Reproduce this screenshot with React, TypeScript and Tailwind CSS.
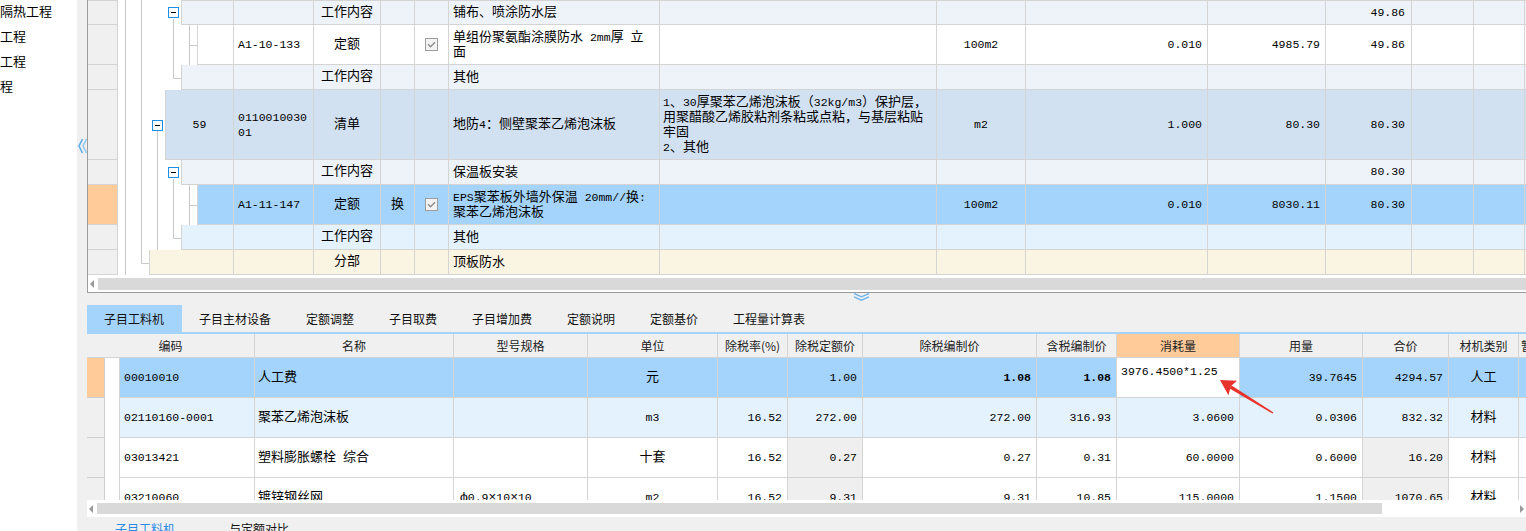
import React from "react";

const MONO = "font-['Liberation_Mono','Noto_Sans_CJK_SC',monospace]";
const GRID = "border-[#d4d4d4]";

function Mixed({ text }: { text: string }) {
  const parts = text.split(/([\x20-\x7e]+)/).filter((p) => p.length > 0);
  return (
    <>
      {parts.map((p, i) =>
        /^[\x20-\x7e]+$/.test(p) ? (
          <span key={i} className="text-[11.5px]">
            {p}
          </span>
        ) : (
          <React.Fragment key={i}>{p}</React.Fragment>
        )
      )}
    </>
  );
}

function Lines({ lines }: { lines?: string[] }) {
  if (!lines) return null;
  return (
    <div className="leading-[15px] whitespace-pre">
      {lines.map((l, i) => (
        <div key={i}>
          <Mixed text={l} />
        </div>
      ))}
    </div>
  );
}

function Minus() {
  return (
    <span className="w-[11px] h-[11px] border border-[#1e8fe4] bg-white flex items-center justify-center">
      <span className="w-[5px] h-px bg-black" />
    </span>
  );
}

function Check() {
  return (
    <span className="w-[13px] h-[13px] border border-[#9d9d9d] bg-[#f3f3f3] flex items-center justify-center">
      <svg width="9" height="7" viewBox="0 0 9 7">
        <path d="M1 3.3 L3.5 5.8 L8 1.2" stroke="#8a8a8a" strokeWidth="1.3" fill="none" />
      </svg>
    </span>
  );
}

type U = {
  start: number;
  h: number;
  bg: string;
  rh?: string;
  minus?: boolean;
  seq?: string;
  code?: string[];
  kind?: string;
  huan?: string;
  check?: boolean;
  name?: string[];
  feat?: string[];
  unit?: string;
  qty?: string;
  price?: string;
  total?: string;
};

const SPACER: Record<number, string> = {
  149: "w-[31px]",
  165: "w-[47px]",
  181: "w-[63px]",
  197: "w-[79px]",
};
const SEQW: Record<number, string> = {
  149: "w-[84px]",
  165: "w-[68px]",
  181: "w-[52px]",
  197: "w-[36px]",
};
const ROWH: Record<number, string> = {
  25: "h-[25px]",
  40: "h-[40px]",
  70: "h-[70px]",
};

const upperRows: U[] = [
  { start: 181, h: 25, bg: "bg-[#eef3f9]", minus: true, kind: "工作内容", name: ["铺布、喷涂防水层"], total: "49.86" },
  {
    start: 197,
    h: 40,
    bg: "bg-white",
    code: ["A1-10-133"],
    kind: "定额",
    check: true,
    name: ["单组份聚氨酯涂膜防水 2mm厚 立", "面"],
    unit: "100m2",
    qty: "0.010",
    price: "4985.79",
    total: "49.86",
  },
  { start: 181, h: 25, bg: "bg-[#eef3f9]", kind: "工作内容", name: ["其他"] },
  {
    start: 165,
    h: 70,
    bg: "bg-[#d2e1f2]",
    minus: true,
    seq: "59",
    code: ["0110010030", "01"],
    kind: "清单",
    name: ["地防4：侧壁聚苯乙烯泡沫板"],
    feat: ["1、30厚聚苯乙烯泡沫板（32kg/m3）保护层，", "用聚醋酸乙烯胶粘剂条粘或点粘，与基层粘贴", "牢固", "2、其他"],
    unit: "m2",
    qty: "1.000",
    price: "80.30",
    total: "80.30",
  },
  { start: 181, h: 25, bg: "bg-[#eef3f9]", minus: true, kind: "工作内容", name: ["保温板安装"], total: "80.30" },
  {
    start: 197,
    h: 40,
    bg: "bg-[#a4d4fc]",
    rh: "bg-[#ffcb99]",
    code: ["A1-11-147"],
    kind: "定额",
    huan: "换",
    check: true,
    name: ["EPS聚苯板外墙外保温 20mm//换:", "聚苯乙烯泡沫板"],
    unit: "100m2",
    qty: "0.010",
    price: "8030.11",
    total: "80.30",
  },
  { start: 181, h: 25, bg: "bg-[#e4f2fe]", kind: "工作内容", name: ["其他"] },
  { start: 149, h: 25, bg: "bg-[#faf4e2]", kind: "分部", name: ["顶板防水"] },
];

const CELL = `shrink-0 h-full border-r ${GRID} flex items-center overflow-hidden`;

function UpperRow({ r, first }: { r: U; first: boolean }) {
  return (
    <div className={`flex shrink-0 ${ROWH[r.h]}`}>
      <div
        className={`w-[30px] shrink-0 border-r border-b ${GRID} ${first ? "border-t" : ""} ${r.rh ?? "bg-[#f0f0f0]"}`}
      />
      <div className={`${SPACER[r.start]} shrink-0 flex items-center justify-end pr-[2px]`}>
        {r.minus ? <Minus /> : null}
      </div>
      <div className={`flex-1 flex border-l border-b ${GRID} ${first ? "border-t" : ""} ${r.bg} text-[13px]`}>
        <div className={`${CELL} ${SEQW[r.start]} justify-center`}>
          {r.seq ? <Mixed text={r.seq} /> : null}
        </div>
        <div className={`${CELL} w-[80px] pl-[4px]`}>
          <Lines lines={r.code} />
        </div>
        <div className={`${CELL} w-[67px] justify-center`}>{r.kind}</div>
        <div className={`${CELL} w-[34px] justify-center`}>{r.huan}</div>
        <div className={`${CELL} w-[34px] justify-center`}>{r.check ? <Check /> : null}</div>
        <div className={`${CELL} w-[211px] pl-[4px]`}>
          <Lines lines={r.name} />
        </div>
        <div className={`${CELL} w-[277px] pl-[3px]`}>
          <Lines lines={r.feat} />
        </div>
        <div className={`${CELL} w-[89px] justify-center`}>{r.unit ? <Mixed text={r.unit} /> : null}</div>
        <div className={`${CELL} w-[182px] justify-end pr-[5px]`}>{r.qty ? <Mixed text={r.qty} /> : null}</div>
        <div className={`${CELL} w-[118px] justify-end pr-[5px]`}>
          {r.price ? <Mixed text={r.price} /> : null}
        </div>
        <div className={`${CELL} w-[86px] justify-end pr-[6px]`}>{r.total ? <Mixed text={r.total} /> : null}</div>
        <div className={`${CELL} w-[62px]`} />
        <div className={`${CELL} w-[51px]`} />
        <div className="flex-1" />
      </div>
    </div>
  );
}

function TreeLines() {
  const c = "#c9c9c9";
  return (
    <svg className="absolute left-[30px] top-0 pointer-events-none" width="80" height="275">
      <g stroke={c} strokeWidth="1" fill="none">
        <path d="M7.5 0 V275" />
        <path d="M23.5 0 V263.5 H31" />
        <path d="M39.5 131 V250" />
        <path d="M55.5 19 V78.5 H63" />
        <path d="M71.5 25 V65 M71.5 45.5 H79" />
        <path d="M55.5 179 V238.5 H63" />
        <path d="M71.5 185 V225 M71.5 205.5 H79" />
      </g>
    </svg>
  );
}

function UpperPanel() {
  return (
    <div className="h-[293px] shrink-0 bg-white border-l border-b border-[#9c9c9c] flex flex-col">
      <div className="relative h-[275px] shrink-0 flex flex-col overflow-hidden">
        {upperRows.map((r, i) => (
          <UpperRow key={i} r={r} first={i === 0} />
        ))}
        <TreeLines />
      </div>
      <div className="h-[3px] shrink-0" />
      <div className="h-[12px] shrink-0 flex">
        <div className="w-[10px] shrink-0 flex items-center pl-[2px]">
          <svg width="4" height="8" viewBox="0 0 4 8">
            <path d="M4 0 L0 4 L4 8 Z" fill="#9a9a9a" />
          </svg>
        </div>
        <div className="flex-1 bg-[#d9d9d9]" />
      </div>
      <div className="h-[2px] shrink-0" />
    </div>
  );
}

const tabs = ["子目工料机", "子目主材设备", "定额调整", "子目取费", "子目增加费", "定额说明", "定额基价", "工程量计算表"];

type B = {
  bg: string;
  rh: string;
  code: string;
  name: string;
  spec?: string;
  unit: string;
  rate?: string;
  dep: string;
  ex: string;
  inc: string;
  cons: string;
  qty: string;
  total: string;
  cat: string;
  bold?: boolean;
  edit?: boolean;
  gray?: boolean;
};

const bottomRows: B[] = [
  {
    bg: "bg-[#a4d4fc]",
    rh: "bg-[#ffcb99]",
    code: "00010010",
    name: "人工费",
    unit: "元",
    dep: "1.00",
    ex: "1.08",
    inc: "1.08",
    cons: "3976.4500*1.25",
    qty: "39.7645",
    total: "4294.57",
    cat: "人工",
    bold: true,
    edit: true,
  },
  {
    bg: "bg-[#e4f2fe]",
    rh: "bg-[#f0f0f0]",
    code: "02110160-0001",
    name: "聚苯乙烯泡沫板",
    unit: "m3",
    rate: "16.52",
    dep: "272.00",
    ex: "272.00",
    inc: "316.93",
    cons: "3.0600",
    qty: "0.0306",
    total: "832.32",
    cat: "材料",
  },
  {
    bg: "bg-white",
    rh: "bg-[#f0f0f0]",
    code: "03013421",
    name: "塑料膨胀螺栓 综合",
    unit: "十套",
    rate: "16.52",
    dep: "0.27",
    ex: "0.27",
    inc: "0.31",
    cons: "60.0000",
    qty: "0.6000",
    total: "16.20",
    cat: "材料",
    gray: true,
  },
  {
    bg: "bg-white",
    rh: "bg-[#f0f0f0]",
    code: "03210060",
    name: "镀锌钢丝网",
    spec: "ф0.9×10×10",
    unit: "m2",
    rate: "16.52",
    dep: "9.31",
    ex: "9.31",
    inc: "10.85",
    cons: "115.0000",
    qty: "1.1500",
    total: "1070.65",
    cat: "材料",
    gray: true,
  },
];

function Num({ v, bold }: { v?: string; bold?: boolean }) {
  if (!v) return null;
  return <span className={`text-[11.5px] ${bold ? "font-bold" : ""}`}>{v}</span>;
}

function BottomRow({ r }: { r: B }) {
  return (
    <div className="flex h-[40px] shrink-0">
      <div className={`w-[18px] shrink-0 border-r border-b border-[#cfcfcf] ${r.rh}`} />
      <div className="w-[15px] shrink-0 bg-white border-r border-[#d4d4d4]" />
      <div className={`flex-1 flex border-b ${GRID} ${r.bg} text-[13px]`}>
        <div className={`${CELL} w-[135px] pl-[4px]`}>
          <Num v={r.code} />
        </div>
        <div className={`${CELL} w-[199px] pl-[3px] whitespace-pre`}>
          <Mixed text={r.name} />
        </div>
        <div className={`${CELL} w-[134px] pl-[6px] whitespace-pre`}>
          {r.spec ? <Mixed text={r.spec} /> : null}
        </div>
        <div className={`${CELL} w-[130px] justify-center`}>
          <Mixed text={r.unit} />
        </div>
        <div className={`${CELL} w-[70px] justify-end pr-[5px]`}>
          <Num v={r.rate} />
        </div>
        <div className={`${CELL} w-[75px] justify-end pr-[5px] ${r.gray ? "bg-[#efefef]" : ""}`}>
          <Num v={r.dep} />
        </div>
        <div className={`${CELL} w-[174px] justify-end pr-[5px]`}>
          <Num v={r.ex} bold={r.bold} />
        </div>
        <div className={`${CELL} w-[80px] justify-end pr-[5px]`}>
          <Num v={r.inc} bold={r.bold} />
        </div>
        {r.edit ? (
          <div className={`shrink-0 h-full border-r ${GRID} w-[123px] bg-white pl-[4px] pt-[4px] overflow-hidden`}>
            <span className="text-[11.5px]">{r.cons}</span>
          </div>
        ) : (
          <div className={`${CELL} w-[123px] justify-end pr-[5px]`}>
            <Num v={r.cons} />
          </div>
        )}
        <div className={`${CELL} w-[123px] justify-end pr-[5px]`}>
          <Num v={r.qty} />
        </div>
        <div className={`${CELL} w-[86px] justify-end pr-[5px] ${r.gray ? "bg-[#efefef]" : ""}`}>
          <Num v={r.total} />
        </div>
        <div className={`${CELL} w-[70px] justify-center`}>{r.cat}</div>
        <div className="flex-1" />
      </div>
    </div>
  );
}

const HCELL = `shrink-0 h-full border-r ${GRID} flex items-center justify-center overflow-hidden whitespace-nowrap`;

function BottomTable() {
  return (
    <div className="bg-white flex flex-col shrink-0">
      <div
        className={`h-[24px] shrink-0 flex bg-[#f0f0f0] border-b ${GRID} text-[12px] text-[#222] font-['Noto_Sans_CJK_SC',sans-serif]`}
      >
        <div className={`${HCELL} w-[168px]`}>编码</div>
        <div className={`${HCELL} w-[199px]`}>名称</div>
        <div className={`${HCELL} w-[134px]`}>型号规格</div>
        <div className={`${HCELL} w-[130px]`}>单位</div>
        <div className={`${HCELL} w-[70px]`}>除税率(%)</div>
        <div className={`${HCELL} w-[75px]`}>除税定额价</div>
        <div className={`${HCELL} w-[174px]`}>除税编制价</div>
        <div className={`${HCELL} w-[80px]`}>含税编制价</div>
        <div className={`${HCELL} w-[123px] bg-[#ffcb99]`}>消耗量</div>
        <div className={`${HCELL} w-[123px]`}>用量</div>
        <div className={`${HCELL} w-[86px]`}>合价</div>
        <div className={`${HCELL} w-[70px]`}>材机类别</div>
        <div className="flex-1 overflow-hidden whitespace-nowrap flex items-center pl-[2px]">暂估</div>
      </div>
      <div className="h-[142px] shrink-0 overflow-hidden flex flex-col text-black">
        {bottomRows.map((r, i) => (
          <BottomRow key={i} r={r} />
        ))}
      </div>
      <div className="h-[3px] shrink-0" />
      <div className="h-[11px] shrink-0 flex">
        <div className="w-[10px] shrink-0 flex items-center pl-[2px]">
          <svg width="4" height="8" viewBox="0 0 4 8">
            <path d="M4 0 L0 4 L4 8 Z" fill="#9a9a9a" />
          </svg>
        </div>
        <div className="w-[1285px] shrink-0 bg-[#d9d9d9]" />
        <div className="flex-1" />
        <div className="w-[6px] shrink-0 flex items-center">
          <svg width="4" height="8" viewBox="0 0 4 8">
            <path d="M0 0 L4 4 L0 8 Z" fill="#9a9a9a" />
          </svg>
        </div>
      </div>
      <div className="h-[3px] shrink-0" />
    </div>
  );
}

export default function App() {
  return (
    <div className={`relative w-[1526px] h-[531px] overflow-hidden flex bg-[#f0f0f0] text-black ${MONO}`}>
      <div className="w-[77px] shrink-0 bg-white text-[13px] leading-[25px] whitespace-nowrap overflow-hidden">
        <div>隔热工程</div>
        <div>工程</div>
        <div>工程</div>
        <div>程</div>
      </div>
      <div className="w-[10px] shrink-0 pt-[138px] pl-[1px]">
        <svg width="9" height="16" viewBox="0 0 9 16">
          <path d="M4.5 1 L1 8 L4.5 15" stroke="#5eb0ea" strokeWidth="1.6" fill="none" />
          <path d="M8.5 1 L5 8 L8.5 15" stroke="#8fcaf3" strokeWidth="1.6" fill="none" />
        </svg>
      </div>
      <div className="w-[1439px] shrink-0 flex flex-col">
        <UpperPanel />
        <div className="h-[12px] shrink-0 pl-[766px]">
          <svg width="17" height="8" viewBox="0 0 17 8">
            <path d="M1 0.5 L8.5 3.8 L16 0.5" stroke="#6fb6ec" strokeWidth="1.4" fill="none" />
            <path d="M1 3.8 L8.5 7.2 L16 3.8" stroke="#6fb6ec" strokeWidth="1.4" fill="none" />
          </svg>
        </div>
        <div className="h-[27px] shrink-0 flex text-[12px] text-[#111] font-['Noto_Sans_CJK_SC',sans-serif]">
          {tabs.map((t, i) => (
            <div key={t} className={`pl-[17px] pr-[18px] flex items-center ${i === 0 ? "bg-[#a4d4fc]" : ""}`}>
              {t}
            </div>
          ))}
        </div>
        <div className="h-[2px] shrink-0 bg-[#a4d4fc]" />
        <BottomTable />
        <div className="h-[14px] shrink-0 overflow-hidden flex pt-[3px] text-[12px] font-['Noto_Sans_CJK_SC',sans-serif]">
          <div className="ml-[28px] text-[#2b8be6]">子目工料机</div>
          <div className="ml-[54px] text-[#111]">与定额对比</div>
        </div>
      </div>
      <svg className="absolute left-0 top-0 pointer-events-none" width="1526" height="531">
        <polygon points="1273.4,412.5 1272.6,413.5 1229.6,388.6 1231.6,385.4" fill="#e8332a" />
        <polygon points="1220,380 1237,380.8 1231,386 1228.4,395.2" fill="#e8332a" />
      </svg>
    </div>
  );
}
